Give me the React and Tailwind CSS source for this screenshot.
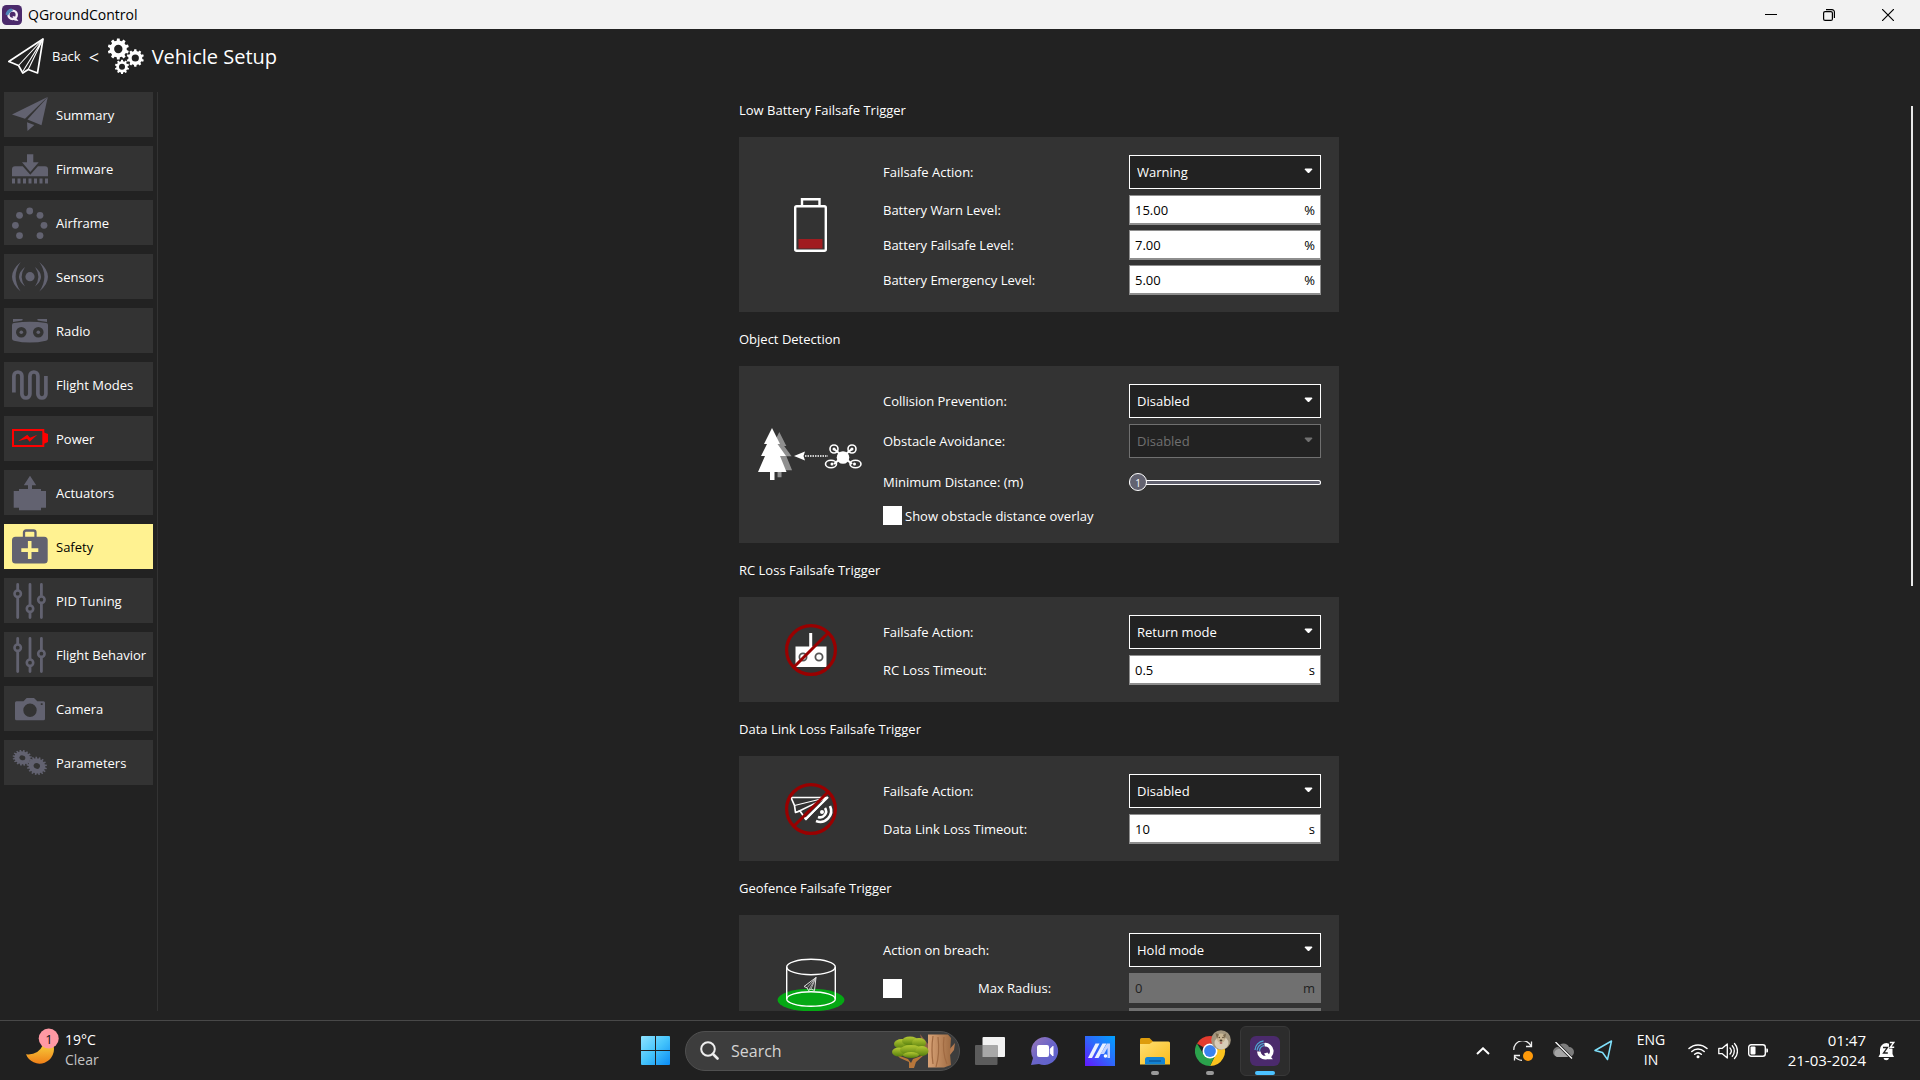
import React, { useState } from "react";

/* ---------- helpers ---------- */

function gearPath(cx, cy, r, hole, teeth, depth) {
  const step = (Math.PI * 2) / teeth;
  const pt = (rad, a) => `${(cx + rad * Math.cos(a)).toFixed(2)} ${(cy + rad * Math.sin(a)).toFixed(2)}`;
  let d = "";
  for (let i = 0; i < teeth; i++) {
    const a = i * step - Math.PI / 2;
    d += `${i === 0 ? "M" : "L"}${pt(r - depth, a - step * 0.3)}L${pt(r, a - step * 0.2)}L${pt(r, a + step * 0.2)}L${pt(r - depth, a + step * 0.3)}`;
  }
  return `${d}ZM${cx - hole} ${cy}a${hole} ${hole} 0 1 0 ${hole * 2} 0a${hole} ${hole} 0 1 0 ${-hole * 2} 0Z`;
}

function Icon({ children, className = "size-9 shrink-0", box = "0 0 36 36" }) {
  return (
    <svg viewBox={box} className={className} fill="currentColor" aria-hidden="true">
      {children}
    </svg>
  );
}

/* ---------- sidebar icons ---------- */

const SummaryIcon = () => (
  <Icon>
    <path d="M0 17.5 35.5 0 13 21.8Z" />
    <path d="M35.8 0 29.5 28.3 15.5 22.6Z" />
    <path d="M15 25.2 22.3 28 15.5 34Z" />
  </Icon>
);
const FirmwareIcon = () => (
  <Icon>
    <path d="M15 3.3h6.3v8h5.4l-8.4 9.7L10 11.3h5Z" />
    <path d="M3 15.3h7.7l7.6 8.4 7.6-8.4H33a3 3 0 0 1 3 3v7H0v-7a3 3 0 0 1 3-3Z" />
    <path d="M0 27.4h3v5.2H0zM5.5 27.4h3v5.2h-3zM11 27.4h3v5.2h-3zM16.5 27.4h3v5.2h-3zM22 27.4h3v5.2h-3zM27.5 27.4h3v5.2h-3zM33 27.4h3v5.2h-3z" />
  </Icon>
);
const AirframeIcon = () => (
  <Icon>
    {[[17.7, 6], [7.5, 10.3], [28, 10.3], [3.4, 20.3], [32, 20.3], [7.5, 30.6], [28, 30.6]].map(([x, y]) => (
      <circle key={`${x}-${y}`} cx={x} cy={y} r="3.4" />
    ))}
  </Icon>
);
const SensorsIcon = () => (
  <Icon>
    <circle cx="18" cy="17.7" r="4.6" />
    <path d="M8.7 3Q-8.7 17.7 8.7 32.6 -1.5 17.7 8.7 3Z" />
    <path d="M13 8Q1 17.7 13 27.4 6.4 17.7 13 8Z" />
    <path d="M27.3 3Q44.7 17.7 27.3 32.6 37.5 17.7 27.3 3Z" />
    <path d="M23 8Q35 17.7 23 27.4 29.6 17.7 23 8Z" />
  </Icon>
);
const RadioIcon = () => (
  <Icon>
    <path
      fillRule="evenodd"
      d="M0 12Q0 10.2 2 10 18 7.4 34 10 36 10.2 36 12V25.5Q36 27.3 34 27.7 18 31.5 2 27.7 0 27.3 0 25.5ZM4 19.3a5.3 5.3 0 1 0 10.6 0a5.3 5.3 0 1 0-10.6 0ZM21 19.3a5.3 5.3 0 1 0 10.6 0a5.3 5.3 0 1 0-10.6 0Z"
    />
    <circle cx="9.3" cy="19.3" r="1.8" />
    <circle cx="26.3" cy="19.3" r="1.8" />
    <path d="M1 6h9.7l-.4 1.5L1 9ZM35 6h-9.7l.4 1.5L35 9Z" />
  </Icon>
);
const FlightModesIcon = () => (
  <Icon>
    <path
      d="M1.9 25.5V9a4 4 0 0 1 8 0V27a4 4 0 0 0 8 0V9a4 4 0 0 1 8 0V27a4 4 0 0 0 8 0V9"
      fill="none"
      stroke="currentColor"
      strokeWidth="3.7"
    />
  </Icon>
);
const PowerIcon = () => (
  <Icon className="size-9 shrink-0 text-[#ff0000]">
    <rect x="1" y="9" width="30.3" height="16" fill="none" stroke="currentColor" strokeWidth="2" />
    <path d="M32 11.5 36 13V21L32 22.7ZM6 20.3 15.3 13.7 18 16.7 25.3 13.7 17.7 20.7 15 17.7Z" />
  </Icon>
);
const ActuatorsIcon = () => (
  <Icon>
    <path d="M18 .7 24.2 10.3H20V14H29V16H34V32.7H29V35.3H7V32.7H1.7V16H7V14H16V10.3H11.8Z" />
  </Icon>
);
const SafetyIcon = () => (
  <Icon>
    <path d="M12 8V3.5a2 2 0 0 1 2-2h7.5a2 2 0 0 1 2 2V8" fill="none" stroke="currentColor" strokeWidth="2.3" />
    <path
      fillRule="evenodd"
      d="M3.5 7.7H32.2a3.5 3.5 0 0 1 3.5 3.5V31a3.5 3.5 0 0 1-3.5 3.5H3.5A3.5 3.5 0 0 1 0 31V11.2a3.5 3.5 0 0 1 3.5-3.5ZM15.9 12v7.3H9.3v3.6h6.6V30h3.6v-7.1h6.8v-3.6h-6.8V12Z"
    />
  </Icon>
);
const TuningIcon = () => (
  <Icon>
    <path
      d="M5.7 1.4V6.5M5.7 15V34.6M18 1.4V21.5M18 30V34.6M29.4 1.4V12.5M29.4 21V34.6"
      stroke="currentColor"
      strokeWidth="2.8"
      strokeLinecap="round"
    />
    <g fill="none" stroke="currentColor" strokeWidth="2.6">
      <circle cx="5.7" cy="10.7" r="3.2" />
      <circle cx="18" cy="25.7" r="3.2" />
      <circle cx="29.4" cy="16.7" r="3.2" />
    </g>
  </Icon>
);
const CameraIcon = () => (
  <Icon>
    <path
      fillRule="evenodd"
      d="M4.5 10.3H11.5L14.7 7H22L25.3 10.3H31.5A1.5 1.5 0 0 1 33 11.8V27.8A1.5 1.5 0 0 1 31.5 29.3H4.5A1.5 1.5 0 0 1 3 27.8V11.8A1.5 1.5 0 0 1 4.5 10.3ZM11.3 19.3a6.7 6.7 0 1 0 13.4 0a6.7 6.7 0 1 0-13.4 0ZM28.8 12.2v1.8h1.8v-1.8Z"
    />
  </Icon>
);
const ParametersIcon = () => (
  <Icon>
    <path fillRule="evenodd" transform="rotate(12 10 13) translate(0 2.6) scale(1 .8)" d={gearPath(10.3, 12.7, 9.8, 3, 16, 1.8)} />
    <path fillRule="evenodd" transform="rotate(20 25 21) translate(0 2.5) scale(1 .88)" d={gearPath(24.8, 21, 10.3, 3.2, 17, 1.9)} />
  </Icon>
);

const NAV = [
  ["Summary", SummaryIcon],
  ["Firmware", FirmwareIcon],
  ["Airframe", AirframeIcon],
  ["Sensors", SensorsIcon],
  ["Radio", RadioIcon],
  ["Flight Modes", FlightModesIcon],
  ["Power", PowerIcon],
  ["Actuators", ActuatorsIcon],
  ["Safety", SafetyIcon],
  ["PID Tuning", TuningIcon],
  ["Flight Behavior", TuningIcon],
  ["Camera", CameraIcon],
  ["Parameters", ParametersIcon],
];

/* ---------- title bar and header ---------- */

function QLogo({ className }) {
  return (
    <svg viewBox="0 0 30 30" className={className} aria-hidden="true">
      <rect width="30" height="30" rx="6" fill="#4b2a6c" />
      <path d="M14.5 8.7A6.500 6.500 0 1 1 8.800 15.500" fill="none" stroke="#fff" strokeWidth="3.6" />
      <path d="M14 17.500 17.500 16.500 22.800 23.300H18Z" fill="#fff" />
      <g fill="none" stroke="#4fa3cf" strokeWidth="1.3">
        <path d="M5 14A9.5 9.5 0 0 1 13.500 5" />
        <path d="M7.200 14.500A8 8 0 0 1 13.800 7.300" />
        <path d="M9.500 15A5.500 5.500 0 0 1 14 9.700" />
      </g>
    </svg>
  );
}

function SmallQLogo() {
  return (
    <svg viewBox="0 0 20 20" className="size-5" aria-hidden="true">
      <rect width="20" height="20" rx="4.5" fill="#4b2a6c" />
      <circle cx="10.6" cy="9.8" r="4.2" fill="#4b2a6c" stroke="#f4f0f8" strokeWidth="2.4" />
      <path d="M3.500 9.500A6.500 6.500 0 0 1 9.500 3.500L11 5.500Q8 7 6 10.500Z" fill="#4c86b8" />
      <path d="M10.500 11 13 11.500 16.500 16 12.500 15.500Z" fill="#f4f0f8" />
    </svg>
  );
}

function TitleBar() {
  return (
    <div className="flex h-[29px] shrink-0 items-center bg-[#f2f2f2] pl-0.5 pr-[3px] text-black">
      <SmallQLogo />
      <span className="flex-1 pl-1.5 text-[14px] leading-5">QGroundControl</span>
      <button aria-label="Minimize" className="flex h-full w-[58px] items-center justify-center">
        <svg viewBox="0 0 12 12" className="size-3"><path d="M0 5.500H12" stroke="#000" strokeWidth="1" /></svg>
      </button>
      <button aria-label="Restore" className="flex h-full w-[58px] items-center justify-center">
        <svg viewBox="0 0 12 12" className="size-3" fill="none" stroke="#000" strokeWidth="1.2">
          <rect x=".6" y="2.6" width="8.8" height="8.8" rx="1.5" />
          <path d="M3 .6H9A2.4 2.4 0 0 1 11.4 3V9" />
        </svg>
      </button>
      <button aria-label="Close" className="flex h-full w-[59px] items-center justify-center">
        <svg viewBox="0 0 12 12" className="size-3"><path d="M0 0 12 12M12 0 0 12" stroke="#000" strokeWidth="1.2" /></svg>
      </button>
    </div>
  );
}

const PlaneOutline = ({ className }) => (
  <svg viewBox="0 0 36 36" className={className} fill="none" stroke="#fff" strokeLinejoin="round" aria-hidden="true">
    <path d="M.8 23.5 35 1 29.5 35 20.2 31.5 14.8 35 10.5 27.5Z" strokeWidth="1.7" />
    <path d="M35 1 10.5 27.5M35 1 14.8 33.5M35 1 20.2 31.5" strokeWidth="1.1" />
  </svg>
);

function Header() {
  return (
    <header className="flex h-[54px] shrink-0 items-center px-2">
      <button className="flex items-center gap-2 text-[13px]">
        <PlaneOutline className="size-9" />
        <span className="pt-0.5">Back</span>
      </button>
      <span className="w-[27px] pl-2 pt-0.5 text-[18px] leading-6">&lt;</span>
      <Icon className="size-9 text-white">
        <path fillRule="evenodd" d={gearPath(10.3, 11, 10.7, 4.2, 10, 2.2)} />
        <path fillRule="evenodd" d={gearPath(27.3, 20, 8.7, 3.6, 10, 1.7)} />
        <path fillRule="evenodd" d={gearPath(14, 28.8, 7.2, 3, 10, 1.5)} />
      </Icon>
      <h1 className="pl-2 pt-0.5 text-[20px] leading-6">Vehicle Setup</h1>
    </header>
  );
}

function Sidebar() {
  return (
    <nav className="mt-[9px] flex w-[158px] shrink-0 flex-col gap-[9px] border-r border-[#333333] pl-1 pr-1">
      {NAV.map(([label, Glyph]) => (
        <button
          key={label}
          className={
            label === "Safety"
              ? "flex h-[45px] w-[149px] shrink-0 items-center gap-2 whitespace-nowrap bg-[#fff291] pl-2 text-[13px] text-black"
              : "flex h-[45px] w-[149px] shrink-0 items-center gap-2 whitespace-nowrap bg-[#333333] pl-2 text-[13px] text-white"
          }
        >
          <span className="text-[#626270]"><Glyph /></span>
          <span className="pt-0.5">{label}</span>
        </button>
      ))}
    </nav>
  );
}

/* ---------- section pictures ---------- */

const BatteryPicture = () => (
  <svg viewBox="0 0 34 54" className="h-[54px] w-[34px]" aria-hidden="true">
    <path d="M8 8V1.2H25.5V8" fill="none" stroke="#fff" strokeWidth="2.4" />
    <rect x="1.2" y="8.3" width="30.6" height="44.5" rx="1.5" fill="none" stroke="#fff" strokeWidth="2.4" />
    <rect x="4.5" y="41" width="24" height="9.5" fill="#a01c20" />
  </svg>
);

const TREE = "M14 0 22 16H19.5L28 28H22L28.5 44H16.5V52H12V44H0L7 28H3L9 16H6Z";

const ObjectPicture = () => (
  <svg viewBox="0 0 106 53" className="h-[53px] w-[106px]" aria-hidden="true">
    <path d={TREE} fill="#8f8f8f" transform="translate(9 4) scale(.88 .87)" />
    <path d={TREE} fill="#fff" />
    <path d="M36 28 47 23.5 45.5 28 47 32.5Z" fill="#fff" />
    <path d="M47 28H70" stroke="#fff" strokeWidth="1.5" strokeDasharray="1.5 1" />
    <path d="M76 21 94 36M94 21 76 36" stroke="#fff" strokeWidth="2.2" />
    <circle cx="85" cy="29.5" r="6.3" fill="#fff" />
    <g fill="none" stroke="#fff" strokeWidth="1.6">
      <circle cx="76" cy="21" r="4" />
      <circle cx="94" cy="21" r="4" />
      <ellipse cx="73" cy="36" rx="5.5" ry="3.8" />
      <ellipse cx="97.5" cy="36" rx="5.5" ry="3.8" />
    </g>
    <circle cx="76" cy="21" r="1.5" fill="#fff" />
    <circle cx="94" cy="21" r="1.5" fill="#fff" />
    <circle cx="74" cy="36" r="1.5" fill="#fff" />
    <circle cx="96.5" cy="36" r="1.5" fill="#fff" />
  </svg>
);

const NoEntry = () => (
  <g fill="none" stroke="#990000">
    <circle cx="26" cy="26" r="24.4" strokeWidth="3.2" />
    <path d="M9 43 43 9" strokeWidth="3" />
  </g>
);

const RcPicture = () => (
  <svg viewBox="0 0 52 52" className="size-[52px]" aria-hidden="true">
    <rect x="10.5" y="22.5" width="31" height="20.5" fill="#fff" />
    <path d="M25.7 9V24" stroke="#fff" strokeWidth="3" />
    <g fill="#fff" stroke="#555" strokeWidth="1.8">
      <circle cx="18" cy="33" r="3.6" />
      <circle cx="34" cy="33" r="3.6" />
    </g>
    <NoEntry />
  </svg>
);

const DataLinkPicture = () => (
  <svg viewBox="0 0 52 52" className="size-[52px]" aria-hidden="true">
    <g fill="none" stroke="#fff" strokeWidth="1.7" strokeLinejoin="round">
      <path d="M6 14.5H42L21 36.5 15 28 10.5 29.5 9.5 22.5Z" />
      <path d="M42 14.5 9.5 22.5M42 14.5 10.5 29.5M42 14.5 15 28" strokeWidth="1.1" />
    </g>
    <path d="M43 14 20 36.5" stroke="#fff" strokeWidth="2.4" />
    <g fill="none" stroke="#fff" strokeWidth="2.6">
      <path d="M40 25A6 6 0 0 1 33 34" />
      <path d="M45 23A11 11 0 0 1 31 38" />
    </g>
    <NoEntry />
    <circle cx="37" cy="29" r="2" fill="#fff" />
  </svg>
);

const GeofencePicture = () => (
  <svg viewBox="0 0 68 54" className="h-[54px] w-[68px]" aria-hidden="true">
    <ellipse cx="34" cy="42" rx="33.5" ry="11.3" fill="#05a814" />
    <g fill="none" stroke="#fff" strokeWidth="1.4">
      <ellipse cx="34" cy="9" rx="24.3" ry="7.7" />
      <ellipse cx="34" cy="41" rx="24.3" ry="7.3" />
      <path d="M9.7 9V41M58.3 9V41" />
    </g>
    <g fill="none" stroke="#ddd" strokeWidth="1" strokeLinejoin="round">
      <path d="M27 28.5 39 19.5 37.5 32.5 34 31 31.5 32.5 30 29.8Z" />
      <path d="M39 19.5 30 29.8M39 19.5 31.5 32.5M39 19.5 34 31" strokeWidth=".7" />
    </g>
  </svg>
);

/* ---------- form controls ---------- */

function SelectField({ id, value, disabled }) {
  return (
    <div className="relative h-[34px] w-48 shrink-0">
      <select
        id={id}
        disabled={disabled}
        defaultValue={value}
        className="h-full w-full appearance-none border border-white bg-[#222222] pl-[7px] pr-7 text-[13px] text-white opacity-100 outline-none disabled:border-[#707070] disabled:text-[#707070]"
      >
        <option>{value}</option>
      </select>
      <svg
        viewBox="0 0 9 6"
        className={
          disabled
            ? "pointer-events-none absolute right-2 top-[13px] h-1.5 w-[9px] text-[#707070]"
            : "pointer-events-none absolute right-2 top-[13px] h-1.5 w-[9px] text-white"
        }
      >
        <path d="M.5 1.300 1.300 .5H7.700L8.500 1.300 5 5H4Z" fill="currentColor" />
      </svg>
    </div>
  );
}

function NumberField({ id, label, value, unit, disabled }) {
  return (
    <div
      className={
        disabled
          ? "flex h-[30px] w-48 shrink-0 items-center border border-[#707070] bg-[#707070] px-[5px] text-[13px] text-[#222222]"
          : "flex h-[30px] w-48 shrink-0 items-center border border-b-2 border-[#8e8e8e] bg-white px-[5px] text-[13px] text-black"
      }
    >
      <input id={id} aria-label={label} defaultValue={value} disabled={disabled} className="h-full min-w-0 flex-1 bg-transparent outline-none" />
      <span>{unit}</span>
    </div>
  );
}

const TickBox = ({ id, label }) => (
  <input
    id={id}
    type="checkbox"
    aria-label={label}
    className="size-[19px] shrink-0 appearance-none border border-white bg-white checked:bg-[#626270]"
  />
);

function SelectRow({ id, label, value, disabled }) {
  return (
    <div className="flex h-[35px] items-start justify-between">
      <label htmlFor={id} className="leading-[34px]">{label}</label>
      <SelectField id={id} value={value} disabled={disabled} />
    </div>
  );
}

function NumberRow({ id, label, value, unit }) {
  return (
    <div className="flex h-[30px] items-center justify-between">
      <label htmlFor={id}>{label}</label>
      <NumberField id={id} value={value} unit={unit} />
    </div>
  );
}

function DistanceRow() {
  const [value, setValue] = useState(1);
  return (
    <div className="flex h-[37px] items-center justify-between">
      <label htmlFor="min-distance" className="pb-0.5">Minimum Distance: (m)</label>
      <div className="relative flex w-48 items-center">
        <input
          id="min-distance"
          type="range"
          min="1"
          max="15"
          value={value}
          onChange={(e) => setValue(Number(e.target.value))}
          className="h-[18px] w-full appearance-none bg-transparent outline-none [&::-webkit-slider-runnable-track]:h-[5px] [&::-webkit-slider-runnable-track]:rounded-full [&::-webkit-slider-runnable-track]:bg-[#626270] [&::-webkit-slider-runnable-track]:shadow-[inset_0_0_0_1px_#fff] [&::-webkit-slider-thumb]:-mt-[7px] [&::-webkit-slider-thumb]:size-[18px] [&::-webkit-slider-thumb]:appearance-none [&::-webkit-slider-thumb]:rounded-full [&::-webkit-slider-thumb]:border [&::-webkit-slider-thumb]:border-white [&::-webkit-slider-thumb]:bg-[#626270]"
        />
        <span
          className="pointer-events-none absolute w-[18px] text-center text-[10px] leading-[18px] text-white"
          style={{ left: `${((value - 1) / 14) * 174}px` }}
        >
          {value}
        </span>
      </div>
    </div>
  );
}

function Section({ title, picture, children }) {
  return (
    <section>
      <h2 className="flex h-[54px] items-center">{title}</h2>
      <div className="flex bg-[#333333]">
        <div className="flex w-36 shrink-0 items-center justify-center">{picture}</div>
        <div className="flex flex-1 flex-col gap-[5px] pb-[17px] pr-[18px] pt-[18px]">{children}</div>
      </div>
    </section>
  );
}

function SafetyForm() {
  return (
    <main className="flex min-h-0 flex-1">
      <div className="min-w-0 flex-1 overflow-y-auto pl-[9px] [scrollbar-width:none]">
        <div className="mx-auto w-full max-w-[600px] text-[13px] leading-[18px] text-white">
          <Section title="Low Battery Failsafe Trigger" picture={<BatteryPicture />}>
            <SelectRow id="bat-action" label="Failsafe Action:" value="Warning" />
            <NumberRow id="bat-warn" label="Battery Warn Level:" value="15.00" unit="%" />
            <NumberRow id="bat-fail" label="Battery Failsafe Level:" value="7.00" unit="%" />
            <NumberRow id="bat-emergency" label="Battery Emergency Level:" value="5.00" unit="%" />
          </Section>
          <Section title="Object Detection" picture={<ObjectPicture />}>
            <SelectRow id="collision" label="Collision Prevention:" value="Disabled" />
            <SelectRow id="avoidance" label="Obstacle Avoidance:" value="Disabled" disabled />
            <DistanceRow />
            <div className="flex h-5 items-start gap-[3px]">
              <TickBox id="overlay" />
              <label htmlFor="overlay" className="leading-5">Show obstacle distance overlay</label>
            </div>
          </Section>
          <Section title="RC Loss Failsafe Trigger" picture={<RcPicture />}>
            <SelectRow id="rc-action" label="Failsafe Action:" value="Return mode" />
            <NumberRow id="rc-timeout" label="RC Loss Timeout:" value="0.5" unit="s" />
          </Section>
          <Section title="Data Link Loss Failsafe Trigger" picture={<DataLinkPicture />}>
            <SelectRow id="link-action" label="Failsafe Action:" value="Disabled" />
            <NumberRow id="link-timeout" label="Data Link Loss Timeout:" value="10" unit="s" />
          </Section>
          <Section title="Geofence Failsafe Trigger" picture={<GeofencePicture />}>
            <SelectRow id="fence-action" label="Action on breach:" value="Hold mode" />
            <div className="flex h-[30px] items-center">
              <TickBox id="max-radius-on" label="Limit radius" />
              <label htmlFor="max-radius" className="flex-1 pl-[76px]">Max Radius:</label>
              <NumberField id="max-radius" value="0" unit="m" disabled />
            </div>
            <div className="flex h-[30px] items-center justify-between">
              <TickBox id="max-altitude-on" label="Limit altitude" />
              <NumberField id="max-altitude" label="Maximum altitude" disabled />
            </div>
          </Section>
        </div>
      </div>
      <div className="flex w-[9px] shrink-0 flex-col pt-[23px]">
        <div className="h-[53%] w-0.5 bg-[#e8e8e8]" />
      </div>
    </main>
  );
}

/* ---------- taskbar ---------- */

const WindowsLogo = () => (
  <svg viewBox="0 0 29 29" className="size-[29px]" aria-hidden="true">
    <defs>
      <linearGradient id="win" x1="0" y1="0" x2="29" y2="29" gradientUnits="userSpaceOnUse">
        <stop offset="0" stopColor="#8fe3ff" />
        <stop offset=".5" stopColor="#45c4fb" />
        <stop offset="1" stopColor="#0a8cf5" />
      </linearGradient>
    </defs>
    <path d="M1 0h13v14H0V1a1 1 0 0 1 1-1ZM15 0h13a1 1 0 0 1 1 1v13H15ZM0 15h14v14H1a1 1 0 0 1-1-1ZM15 15h14v13a1 1 0 0 1-1 1H15Z" fill="url(#win)" />
  </svg>
);

const TreesArt = () => (
  <svg viewBox="0 0 63 34" className="h-[34px] w-[63px]" aria-hidden="true">
    <defs>
      <linearGradient id="leaf" x1="0" y1="0" x2="0" y2="1">
        <stop offset="0" stopColor="#b5c934" />
        <stop offset="1" stopColor="#567f0d" />
      </linearGradient>
      <linearGradient id="bark" x1="0" y1="0" x2="1" y2="0">
        <stop offset="0" stopColor="#d9a377" />
        <stop offset="1" stopColor="#a06c43" />
      </linearGradient>
    </defs>
    <path d="M28 0 36 10V18L30 9Z" fill="#8c6048" />
    <path d="M63 9 62 16 58 21 54 27 55 18Z" fill="#b47a50" />
    <path d="M36 .5H56L59 4 58 20 59 31 52 33.500H36Z" fill="url(#bark)" />
    <path d="M41 2Q39 15 41 30M46 3Q48 20 44 33M52 3Q50 18 55 30" stroke="#a06a42" strokeWidth="1.2" fill="none" />
    <path d="M5 21 16 25 19 29 21 25 32 21 24 28 22 34H17V28L8 24Z" fill="#b8773b" />
    <g fill="url(#leaf)">
      <ellipse cx="10" cy="10" rx="8" ry="5" />
      <ellipse cx="18" cy="7" rx="8" ry="4.5" />
      <ellipse cx="27" cy="9" rx="7" ry="5" />
      <ellipse cx="7" cy="18" rx="7" ry="4.5" />
      <ellipse cx="19" cy="16" rx="11" ry="5" />
      <ellipse cx="30" cy="17" rx="6.5" ry="5" />
      <ellipse cx="19" cy="21" rx="8" ry="3" />
    </g>
  </svg>
);

const TaskViewIcon = () => (
  <svg viewBox="0 0 30 30" className="size-[30px]" aria-hidden="true">
    <rect x="7.5" y="1" width="22.5" height="20" rx="1" fill="#f2f2f2" />
    <rect x="0" y="9" width="22.5" height="20" rx="1" fill="#5c5c5c" />
    <rect x="7.5" y="9" width="15" height="12" fill="#a8a8a8" />
  </svg>
);

const ChatIcon = () => (
  <svg viewBox="0 0 30 30" className="size-[30px]" aria-hidden="true">
    <defs>
      <linearGradient id="chat" x1="0" y1="0" x2="1" y2="1">
        <stop offset="0" stopColor="#9c78b8" />
        <stop offset=".5" stopColor="#6a64c8" />
        <stop offset="1" stopColor="#5b62cf" />
      </linearGradient>
    </defs>
    <path d="M15 1A14 14 0 1 1 9 28L1 29 3 22A14 14 0 0 1 15 1Z" fill="url(#chat)" />
    <rect x="7" y="9" width="12" height="12" rx="2" fill="#fff" />
    <path d="M20.3 13 23 10.3V20L20.3 17.5Z" fill="#fff" stroke="#fff" strokeLinejoin="round" />
  </svg>
);

const BarsAppIcon = () => (
  <svg viewBox="0 0 30 30" className="size-[30px]" aria-hidden="true">
    <defs>
      <linearGradient id="bars" x1="0" y1="30" x2="30" y2="0" gradientUnits="userSpaceOnUse">
        <stop offset="0" stopColor="#6316ff" />
        <stop offset=".5" stopColor="#2f67fb" />
        <stop offset="1" stopColor="#00a2ff" />
      </linearGradient>
    </defs>
    <rect width="30" height="30" fill="url(#bars)" />
    <path d="M3 22 10.500 7.500H14.500L7 22Z" fill="#eaf0ff" />
    <path d="M9.500 22 17.500 7.500H21.500L13.500 22Z" fill="#eaf0ff" />
    <path d="M15.500 18 22 7.500H25V22H22.500V12L19 18Z" fill="#c5d3ff" />
    <circle cx="20.500" cy="20" r="1.800" fill="#fff" />
  </svg>
);

const FolderIcon = () => (
  <svg viewBox="0 0 30 30" className="size-[30px]" aria-hidden="true">
    <defs>
      <linearGradient id="folder" x1="0" y1="0" x2="1" y2="1">
        <stop offset="0" stopColor="#ffdf73" />
        <stop offset="1" stopColor="#f9bc1b" />
      </linearGradient>
    </defs>
    <path d="M0 3.5A1.5 1.5 0 0 1 1.5 2H9.5L13 5.5V11H0Z" fill="#dd9c0c" />
    <path d="M0 8H9.5L13 5.5H28.5A1.5 1.5 0 0 1 30 7V28.5H0Z" fill="url(#folder)" />
    <path d="M5 28.5V23.5A2.5 2.5 0 0 1 7.5 21H22.5A2.5 2.5 0 0 1 25 23.5V28.5Z" fill="#1283d3" />
    <path d="M9 25H21" stroke="#0b4f92" strokeWidth="1.2" />
  </svg>
);

const ChromeIcon = () => (
  <svg viewBox="0 0 36 36" className="-mt-1.5 ml-1.5 size-9 shrink-0" aria-hidden="true">
    <path d="M15 21 2 13.5A15 15 0 0 1 28 13.5H15Z" fill="#e33b2e" />
    <path d="M15 21 28 13.5A15 15 0 0 1 15 36L21 24Z" fill="#fcc31e" />
    <path d="M15 21 15 36A15 15 0 0 1 2 13.5L9 25Z" fill="#2ba24c" />
    <path d="M20.5 24.5 15 36 11 33 15 26Z" fill="#2ba24c" />
    <circle cx="15" cy="21" r="7.5" fill="#fff" />
    <circle cx="15" cy="21" r="5.9" fill="#3b82ee" />
    <circle cx="26" cy="10" r="9.8" fill="#a3967e" />
    <ellipse cx="26.5" cy="13" rx="7" ry="6.500" fill="#d8cdb8" />
    <ellipse cx="26" cy="8" rx="4.500" ry="4.500" fill="#c9b795" />
    <path d="M20.5 3 24 4.500 22 9ZM31 3.500 28 5 30 9Z" fill="#7d6c50" />
    <circle cx="24.300" cy="7.500" r=".8" fill="#5a4632" />
    <circle cx="28" cy="7.500" r=".8" fill="#5a4632" />
    <ellipse cx="26" cy="10.500" rx="1.400" ry="1" fill="#4b392c" />
    <path d="M24.800 13H27.200" stroke="#b06860" strokeWidth="1.6" />
  </svg>
);

function TaskButton({ label, children, state }) {
  return (
    <button
      aria-label={label}
      className={
        state === "active"
          ? "relative flex size-[50px] items-center justify-center rounded-md border border-[#383838] bg-[#2c2c2c]"
          : "relative flex size-[50px] items-center justify-center"
      }
    >
      {children}
      {state === "open" && <span className="absolute bottom-px h-1 w-2 rounded-full bg-[#9a9a9a]" />}
      {state === "active" && <span className="absolute bottom-0 h-1 w-5 rounded-full bg-[#4cc2ff]" />}
    </button>
  );
}

function TrayButton({ label, children, wide }) {
  return (
    <button aria-label={label} className={wide ? "flex h-full w-10 items-center justify-center" : "flex h-full w-[30px] items-center justify-center"}>
      {children}
    </button>
  );
}

function Taskbar() {
  return (
    <footer className="grid h-[60px] shrink-0 grid-cols-[1fr_auto_1fr] items-center border-t border-[#484848] bg-[#202020] text-[14px] leading-5 text-white">
      <button className="flex items-center gap-1.5 justify-self-start pl-[25px] text-left">
        <svg viewBox="0 0 34 36" className="-mt-2.5 h-9 w-[34px]" aria-hidden="true">
          <defs>
            <linearGradient id="moon" x1="0" y1="0" x2="0" y2="1">
              <stop offset="0" stopColor="#f7cf3c" />
              <stop offset="1" stopColor="#f08018" />
            </linearGradient>
          </defs>
          <path d="M28 16A14 14 0 0 1 1 26.300Q13 27.500 18 17Z" fill="url(#moon)" />
          <circle cx="23.7" cy="10.5" r="10" fill="#ff99a4" />
          <text x="24" y="15.5" textAnchor="middle" fontSize="13" fill="#111">1</text>
        </svg>
        <span className="flex flex-col pb-0.5">
          <span>19°C</span>
          <span className="text-[#c4c4c4]">Clear</span>
        </span>
      </button>

      <div className="flex items-center gap-[5px]">
        <TaskButton label="Start"><WindowsLogo /></TaskButton>
        <label className="flex h-10 w-[275px] items-center rounded-full border border-[#505050] bg-[#3d3d3d] pl-3.5 pr-1">
          <svg viewBox="0 0 19 19" className="size-[19px] shrink-0" fill="none" stroke="#eee" strokeWidth="2" strokeLinecap="round">
            <circle cx="8" cy="8" r="6.8" />
            <path d="M13 13 17.5 17.5" strokeWidth="2.6" />
          </svg>
          <input
            type="search"
            aria-label="Search"
            placeholder="Search"
            className="min-w-0 flex-1 bg-transparent pl-3 text-[16px] outline-none placeholder:text-[#d4d4d4]"
          />
          <TreesArt />
        </label>
        <TaskButton label="Task view"><TaskViewIcon /></TaskButton>
        <TaskButton label="Chat"><ChatIcon /></TaskButton>
        <TaskButton label="Armoury"><BarsAppIcon /></TaskButton>
        <TaskButton label="File Explorer" state="open"><FolderIcon /></TaskButton>
        <TaskButton label="Chrome" state="open"><ChromeIcon /></TaskButton>
        <TaskButton label="QGroundControl" state="active"><QLogo className="size-[30px]" /></TaskButton>
      </div>

      <div className="flex h-full items-center justify-self-end pr-3.5">
        <TrayButton wide label="Show hidden icons">
          <svg viewBox="0 0 14 8" className="h-2 w-3.5" fill="none" stroke="#fff" strokeWidth="2"><path d="M1 7 7 1.3 13 7" /></svg>
        </TrayButton>
        <TrayButton wide label="Updates">
          <svg viewBox="0 0 20 20" className="size-5" fill="none" stroke="#eee" strokeWidth="1.3">
            <path d="M.8 9A9 9 0 0 1 18 5M18.5 .5V5.5H13M1.5 19.5V14.5H7M1.5 15Q4 19 9 19.3" />
            <circle cx="15" cy="15" r="5" fill="#ff9a0a" stroke="none" />
          </svg>
        </TrayButton>
        <TrayButton wide label="Cloud storage">
          <svg viewBox="0 0 21 17" className="h-[17px] w-[21px]">
            <path d="M5 5A6 6 0 0 1 16 5 5 5 0 0 1 16 15H5A5 5 0 0 1 5 5Z" fill="#7c7c7c" />
            <path d="M4 15A4 4 0 0 1 3 8Q8 5 12 9L19 14Q18 15 16 15Z" fill="#a5a5a5" />
            <path d="M2.5 0 19 16.5" stroke="#202020" strokeWidth="3" />
            <path d="M2.5 0 19 16.5" stroke="#fff" strokeWidth="1.3" />
          </svg>
        </TrayButton>
        <TrayButton wide label="Location">
          <svg viewBox="0 0 19 21" className="h-[21px] w-[19px]" fill="none" stroke="#7fe0fb" strokeWidth="1.5" strokeLinejoin="round">
            <path d="M1 10.5 17.5 1 13.5 19.5 8.5 12.5Z" />
          </svg>
        </TrayButton>
        <button className="w-[60px] pb-0.5 pr-1 text-center">
          <span className="block">ENG</span>
          <span className="block">IN</span>
        </button>
        <TrayButton label="Wi-Fi">
          <svg viewBox="0 0 20 16" className="h-4 w-5" fill="none" stroke="#fff" strokeWidth="1.5" strokeLinecap="round">
            <path d="M1 5.5A13 13 0 0 1 19 5.5M3.8 8.5A9 9 0 0 1 16.2 8.5M6.7 11.3A5 5 0 0 1 13.3 11.3" />
            <circle cx="10" cy="13.7" r="1.5" fill="#fff" stroke="none" />
          </svg>
        </TrayButton>
        <TrayButton label="Volume">
          <svg viewBox="0 0 20 18" className="h-[18px] w-5" fill="none" stroke="#fff" strokeWidth="1.3" strokeLinejoin="round" strokeLinecap="round">
            <path d="M.8 6.3H4.3L9.3 2V16L4.3 11.7H.8Z" />
            <path d="M12 6A4.5 4.5 0 0 1 12 12M14.3 3.7A8 8 0 0 1 14.3 14.3M16.5 1.5A11 11 0 0 1 16.5 16.5" />
          </svg>
        </TrayButton>
        <TrayButton label="Battery">
          <svg viewBox="0 0 20 13" className="h-[13px] w-5">
            <rect x=".7" y=".7" width="16.6" height="11.6" rx="2.5" fill="none" stroke="#fff" strokeWidth="1.4" />
            <path d="M18.3 4.5H19A1 1 0 0 1 20 5.5V7.5A1 1 0 0 1 19 8.5H18.3Z" fill="#fff" />
            <rect x="2.5" y="2.5" width="5" height="8" rx="1" fill="#fff" />
          </svg>
        </TrayButton>
        <button className="w-[93px] pb-0.5 text-right text-[15px]">
          <span className="block">01:47</span>
          <span className="block">21-03-2024</span>
        </button>
        <TrayButton wide label="Notifications">
          <svg viewBox="0 0 17 20" className="h-5 w-[17px]">
            <path d="M2 13V8.500A6.500 6.500 0 0 1 8.500 2Q14.500 3 14.500 8.500V13L16 16H.5Z" fill="#fff" />
            <path d="M5.5 17H11A2.800 2.800 0 0 1 5.5 17Z" fill="#fff" />
            <path d="M5 6.500H9.500L5.500 12H9.800" fill="none" stroke="#202020" strokeWidth="1.3" />
            <path d="M11 .3H17V7.500H11Z" fill="#202020" />
            <path d="M11.800 1.500H15.800L12.300 6.300H16.200" fill="none" stroke="#fff" strokeWidth="1.4" />
          </svg>
        </TrayButton>
      </div>
    </footer>
  );
}

export default function App() {
  return (
    <div className="flex h-screen min-h-[600px] flex-col overflow-hidden bg-[#222222] font-['Open_Sans','Noto_Sans',sans-serif] text-white">
      <TitleBar />
      <Header />
      <div className="flex min-h-0 flex-1 pb-[9px]">
        <Sidebar />
        <SafetyForm />
      </div>
      <Taskbar />
    </div>
  );
}
